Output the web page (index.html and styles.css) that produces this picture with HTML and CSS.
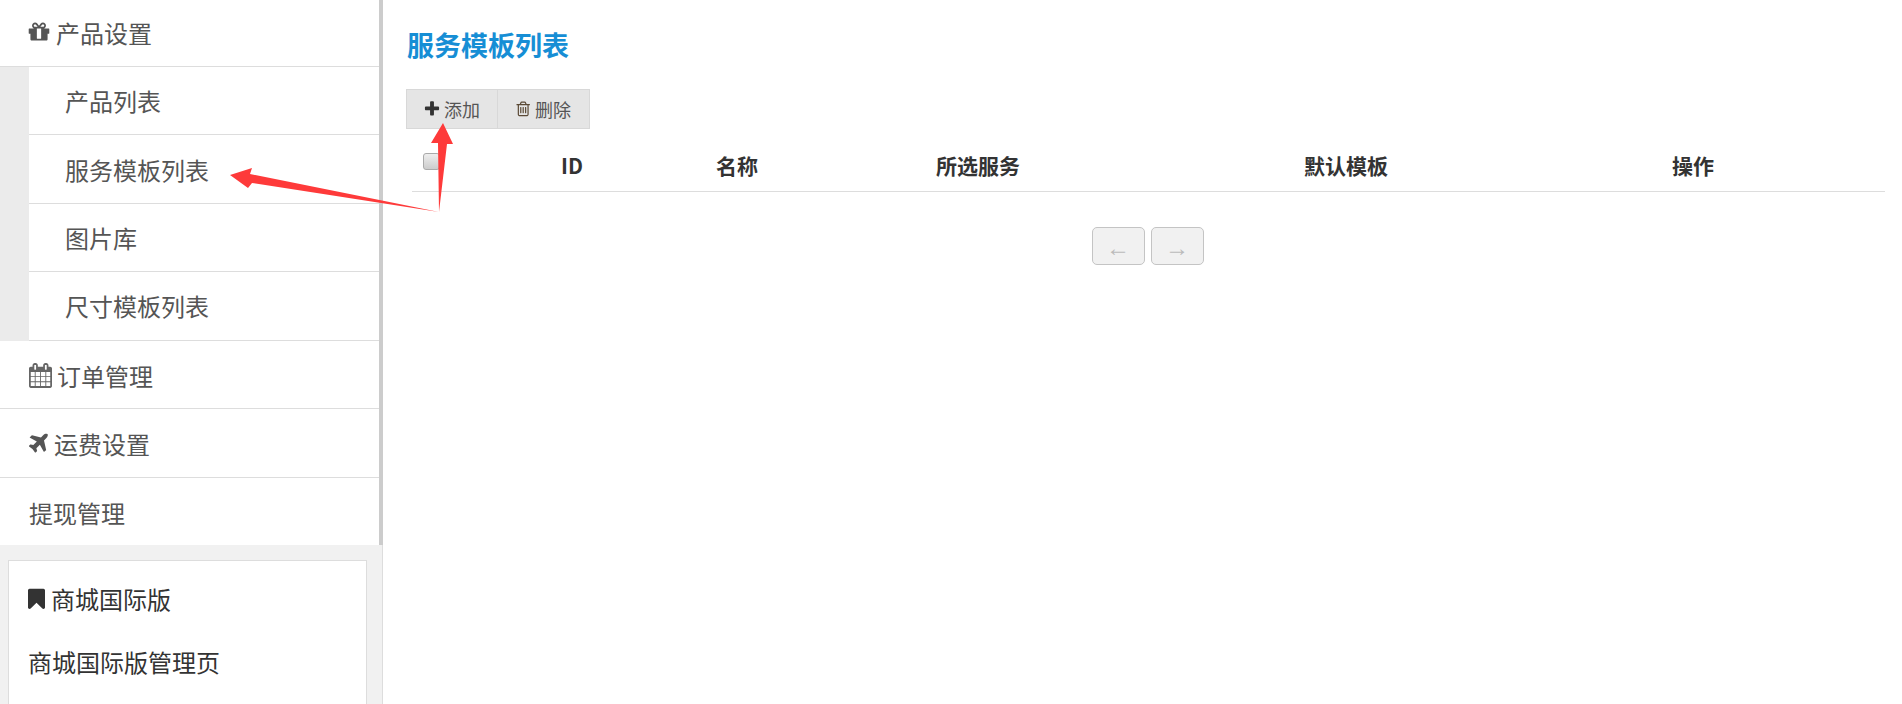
FILE: index.html
```html
<!DOCTYPE html>
<html lang="zh-CN">
<head>
  <meta charset="UTF-8" />
  <title>服务模板列表</title>
  <link rel="stylesheet" href="styles.css">
</head>
<body>
  <div class="sidebar">
    <ul class="menu">
      <li class="menu-item first">
        <svg class="icon icon-gift" viewBox="0 0 1792 1792"><path d="M1056 1356v-716h-320v716q0 25 18 38.5t46 13.5h192q28 0 46-13.5t18-38.5zm-456-844h195l-126-161q-26-31-69-31-40 0-68 28t-28 68 28 68 68 28zm688-96q0-40-28-68t-68-28q-43 0-69 31l-125 161h194q40 0 68-28t28-68zm376 256v320q0 14-9 23t-23 9h-96v416q0 40-28 68t-68 28h-1088q-40 0-68-28t-28-68v-416h-96q-14 0-23-9t-9-23v-320q0-14 9-23t23-9h440q-93 0-158.5-65.5t-65.5-158.5 65.5-158.5 158.5-65.5q107 0 168 77l128 165 128-165q61-77 168-77 93 0 158.5 65.5t65.5 158.5-65.5 158.5-158.5 65.5h440q14 0 23 9t9 23z"/></svg>
        <span class="label">产品设置</span>
      </li>
      <li>
        <ul class="submenu">
          <li class="menu-item">产品列表</li>
          <li class="menu-item">服务模板列表</li>
          <li class="menu-item">图片库</li>
          <li class="menu-item">尺寸模板列表</li>
        </ul>
      </li>
      <li class="menu-item lower">
        <svg class="icon icon-calendar" viewBox="0 0 1664 1792"><path d="M128 1664h288v-288h-288v288zm352 0h320v-288h-320v288zm-352-352h288v-320h-288v320zm352 0h320v-320h-320v320zm-352-384h288v-288h-288v288zm736 736h320v-288h-320v288zm-384-736h320v-288h-320v288zm768 736h288v-288h-288v288zm-384-352h320v-320h-320v320zm-352-864v-288q0-13-9.5-22.5t-22.5-9.5h-64q-13 0-22.5 9.5t-9.5 22.5v288q0 13 9.5 22.5t22.5 9.5h64q13 0 22.5-9.5t9.5-22.5zm736 864h288v-320h-288v320zm-384-384h320v-288h-320v288zm384 0h288v-288h-288v288zm32-480v-288q0-13-9.5-22.5t-22.5-9.5h-64q-13 0-22.5 9.5t-9.5 22.5v288q0 13 9.5 22.5t22.5 9.5h64q13 0 22.5-9.5t9.5-22.5zm384-64v1280q0 52-38 90t-90 38h-1408q-52 0-90-38t-38-90v-1280q0-52 38-90t90-38h128v-96q0-66 47-113t113-47h64q66 0 113 47t47 113v96h384v-96q0-66 47-113t113-47h64q66 0 113 47t47 113v96h128q52 0 90 38t38 90z"/></svg>
        订单管理
      </li>
      <li class="menu-item lower">
        <svg class="icon icon-plane" viewBox="200 100 1408 1600"><path d="M1568 160q44 52 12 148t-108 172l-161 161 160 696q5 19-12 33l-128 96q-7 6-19 6-4 0-7-1-15-3-21-16l-279-508-259 259 53 194q5 17-8 31l-96 96q-9 9-23 9h-2q-15-2-24-13l-189-252-252-189q-11-7-13-23-1-13 9-25l96-97q9-9 23-9 6 0 8 1l194 53 259-259-508-279q-14-8-17-24-2-16 9-27l128-128q14-13 30-8l665 159 160-160q76-76 172-108t148 12z"/></svg>
        运费设置
      </li>
      <li class="menu-item last">提现管理</li>
    </ul>
    <div class="panel">
      <div class="card">
        <div class="card-title">
          <svg class="icon icon-bookmark" viewBox="0 0 1280 1792"><path d="M1164 128q23 0 44 9 33 13 52.5 41t19.5 62v1289q0 34-19.5 62t-52.5 41q-19 8-44 8-48 0-83-32l-441-424-441 424q-36 33-83 33-23 0-44-9-33-13-52.5-41t-19.5-62v-1289q0-34 19.5-62t52.5-41q21-9 44-9h1048z"/></svg>
          商城国际版
        </div>
        <div class="card-link">商城国际版管理页</div>
      </div>
    </div>
  </div>

  <div class="main">
    <h2 class="page-title">服务模板列表</h2>
    <div class="toolbar">
      <button class="tool-btn">
        <svg class="icon icon-plus" viewBox="0 0 1792 1792"><path d="M1600 736v192q0 40-28 68t-68 28h-416v416q0 40-28 68t-68 28h-192q-40 0-68-28t-28-68v-416h-416q-40 0-68-28t-28-68v-192q0-40 28-68t68-28h416v-416q0-40 28-68t68-28h192q40 0 68 28t28 68v416h416q40 0 68 28t28 68z"/></svg>
        <span>添加</span>
      </button>
      <button class="tool-btn">
        <svg class="icon icon-trash" viewBox="0 0 1408 1792"><path d="M480 672v576q0 14-9 23t-23 9h-64q-14 0-23-9t-9-23v-576q0-14 9-23t23-9h64q14 0 23 9t9 23zm256 0v576q0 14-9 23t-23 9h-64q-14 0-23-9t-9-23v-576q0-14 9-23t23-9h64q14 0 23 9t9 23zm256 0v576q0 14-9 23t-23 9h-64q-14 0-23-9t-9-23v-576q0-14 9-23t23-9h64q14 0 23 9t9 23zm128 724v-948h-896v948q0 22 7 40.5t14.5 27 10.5 8.5h832q3 0 10.5-8.5t14.5-27 7-40.5zm-672-1076h448l-48-117q-7-9-17-11h-317q-10 2-17 11zm928 32v64q0 14-9 23t-23 9h-96v948q0 83-47 143.5t-113 60.5h-832q-66 0-113-58.5t-47-141.5v-952h-96q-14 0-23-9t-9-23v-64q0-14 9-23t23-9h309l70-167q15-37 54-63t79-26h320q40 0 79 26t54 63l70 167h309q14 0 23 9t9 23z"/></svg>
        <span>删除</span>
      </button>
    </div>
    <div class="table-head">
      <div class="cell-check"><span class="checkbox"></span></div>
      <div>ID</div>
      <div>名称</div>
      <div>所选服务</div>
      <div>默认模板</div>
      <div>操作</div>
    </div>
    <div class="pager">
      <span class="page-btn">←</span>
      <span class="page-btn">→</span>
    </div>
  </div>

  <!-- red annotation arrows drawn on top of the screenshot -->
  <svg class="arrows" viewBox="0 0 1902 704">
    <polygon fill="#fe3a3a" points="230,175 252,168 250,174 439,212 252,183 248,188"/>
    <polygon fill="#fe3a3a" points="443,123 453,144 447,144 439,212 438,143 431,143"/>
  </svg>
</body>
</html>
```
FILE: styles.css
```css
* { margin: 0; padding: 0; box-sizing: border-box; }
html, body { height: 100%; }
body {
  display: flex;
  overflow: hidden;
  background: #fff;
  font-family: "Noto Sans CJK SC", "Liberation Sans", sans-serif;
  color: #333;
}
ul { list-style: none; }

.icon { fill: currentColor; flex: none; }

/* sidebar */
.sidebar {
  width: 383px;
  flex: none;
  display: flex;
  flex-direction: column;
}
.menu {
  border-right: 4px solid #ccc;
}
.menu-item {
  height: 68.4px;
  display: flex;
  align-items: center;
  gap: 4px;
  padding-left: 29px;
  border-bottom: 1px solid #ddd;
  font-size: 24px;
  color: #555;
}
.menu-item.first { height: 67px; gap: 5px; }
.menu-item.first .label { margin-top: -2px; }
.menu-item.lower { height: 68.5px; padding-top: 2px; }
.menu-item.last { height: 67.4px; padding-top: 2px; border-bottom: none; }
.submenu {
  padding-left: 29px;
  background: #ebebeb;
}
.submenu .menu-item {
  padding-left: 36px;
  background: #fff;
}
.icon-gift { width: 24px; height: 24px; margin-left: -2px; margin-top: -2px; }
.icon-calendar { width: 23px; height: 25px; margin-right: 1px; color: #666; }
.icon-plane { width: 19px; height: 22px; margin-right: 2px; }

.panel {
  flex: 1;
  min-height: 0;
  overflow: hidden;
  background: #f1f1f1;
  padding: 15px 15px 0 8px;
  border-right: 1px solid #ddd;
}
.card {
  height: 260px;
  background: #fff;
  border: 1px solid #ddd;
  padding: 10px 19px;
  font-size: 24px;
  color: #333;
}
.card-title {
  display: flex;
  align-items: center;
  gap: 6px;
  height: 56px;
}
.card-link {
  margin-top: 7px;
  height: 56px;
  line-height: 56px;
}
.icon-bookmark { width: 17px; height: 24px; }

/* main area */
.main {
  flex: 1;
  padding: 0 17px 0 23px;
}
.page-title {
  margin: 25px 0 0 1px;
  font-size: 27px;
  line-height: 40px;
  font-weight: 700;
  color: #168ed5;
}
.toolbar {
  display: flex;
  margin-top: 24px;
}
.tool-btn {
  height: 40px;
  display: flex;
  align-items: center;
  gap: 3px;
  padding: 0 0 0 16px;
  background: #e5e5e5;
  border: 1px solid #d8d8d8;
  font: inherit;
  font-size: 18px;
  color: #555;
  white-space: nowrap;
}
.tool-btn:first-child { width: 92px; }
.tool-btn:last-child { width: 92px; border-left: none; padding-left: 18px; gap: 4px; }
.icon-plus { width: 18px; height: 18px; color: #333; }
.icon-trash { width: 15px; height: 17px; color: #5b4a36; }

.table-head {
  display: grid;
  grid-template-columns: 149px 155px 220px 368px 368px 1fr;
  align-items: center;
  margin: 0 0 0 6px;
  height: 63px;
  padding-top: 9px;
  border-bottom: 1px solid #ddd;
  font-size: 21px;
  font-weight: 700;
  color: #333;
}
.cell-check { padding-left: 11px; align-self: start; padding-top: 15px; }
.checkbox {
  display: block;
  width: 17px;
  height: 17px;
  border: 1px solid #aaa;
  border-radius: 3px;
  background: linear-gradient(#eee, #ccc);
}

.pager {
  display: flex;
  justify-content: center;
  gap: 6px;
  margin-top: 35px;
  padding-left: 4px;
}
.page-btn {
  width: 53px;
  height: 38px;
  display: flex;
  align-items: center;
  justify-content: center;
  padding-top: 4px;
  background: #f1f1f1;
  border: 1px solid #c4c4c4;
  border-radius: 5px;
  font-family: "Liberation Sans", sans-serif;
  font-size: 24px;
  color: #bbb;
}

/* annotation overlay */
.arrows {
  position: absolute;
  left: 0;
  top: 0;
  width: 1902px;
  height: 704px;
  pointer-events: none;
}
```
